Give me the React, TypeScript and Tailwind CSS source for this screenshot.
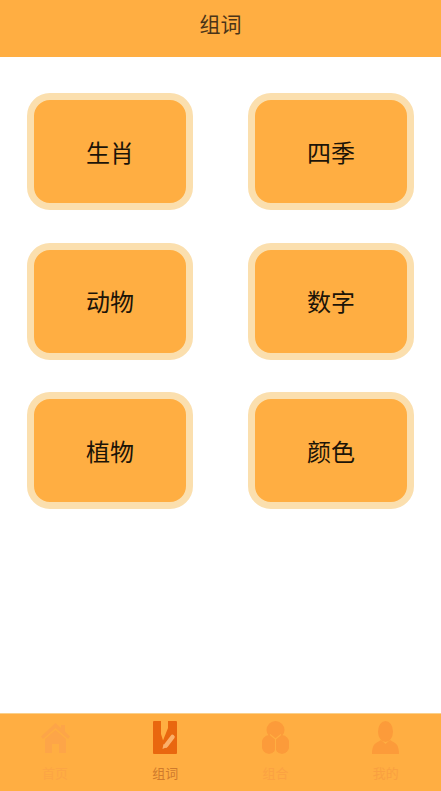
import React from 'react';

const words = ['生肖', '四季', '动物', '数字', '植物', '颜色'];

const HomeIcon = () => (
    <svg width="29" height="30" viewBox="0 0 29 30" fill="currentColor">
        <path d="M14.5 0 L20 5 V2 H24 V8.5 L29 13.5 L27 16 L14.5 5 L2 16 L0 13.5 Z" />
        <path d="M14.5 7 L25 16 V30 H18 V21 H11 V30 H4 V16 Z" />
    </svg>
);

const BookIcon = () => (
    <svg width="24" height="33" viewBox="0 0 24 33" fill="currentColor">
        <rect width="24" height="33" rx="1" />
        <path d="M8 0 H15 V7 L10 19.5 L8 13 Z" fill="#ffae42" />
        <path d="M19.5 16 L13 24.5" stroke="#fbb06a" strokeWidth="4.5" strokeLinecap="round" />
        <path d="M10.5 23 L14 26 L9.5 28 Z" fill="#fbb06a" />
    </svg>
);

const GroupIcon = () => (
    <svg width="27" height="33" viewBox="0 0 27 33" fill="currentColor">
        <circle cx="13.5" cy="9" r="9" />
        <ellipse cx="7" cy="23.5" rx="7.5" ry="9.5" />
        <ellipse cx="20" cy="23.5" rx="7.5" ry="9.5" />
        <path d="M13.5 18 V33 M13.5 18 L19 13.5 M13.5 18 L8 13.5" stroke="#ffae42" strokeWidth="1.1" fill="none" />
    </svg>
);

const UserIcon = () => (
    <svg width="27" height="33" viewBox="0 0 27 33" fill="currentColor">
        <ellipse cx="13.5" cy="10.5" rx="7.5" ry="10.5" />
        <path d="M9 19 L13.5 23 L18 19 L23 22 C25.5 23.5 27 27 27 33 H0 C0 27 1.5 23.5 4 22 Z" />
    </svg>
);

const tabs = [
    { label: '首页', icon: <HomeIcon />, iconColor: 'text-[#fda548]', labelColor: 'text-[#fca545]' },
    { label: '组词', icon: <BookIcon />, iconColor: 'text-[#e9670f]', labelColor: 'text-[#cf7a2c]' },
    { label: '组合', icon: <GroupIcon />, iconColor: 'text-[#fc9b3a]', labelColor: 'text-[#fba242]' },
    { label: '我的', icon: <UserIcon />, iconColor: 'text-[#fc9b3a]', labelColor: 'text-[#f9a040]' },
];

const App: React.FC = () => {
    return (
        <div className="w-[441px] h-[791px] flex flex-col bg-white font-['Noto_Sans_CJK_SC','Noto_Sans',sans-serif] overflow-hidden">
            {/* Title bar */}
            <header className="h-[57px] shrink-0 bg-[#ffae42] flex items-center justify-center pb-[10px] text-[21px] text-[#4a3418]">
                组词
            </header>

            {/* Word groups */}
            <main className="flex-1 pt-9 px-[27px]">
                <div className="grid grid-cols-[166px_166px] gap-x-[55px] gap-y-[32.5px]">
                    {words.map((word) => (
                        <div
                            key={word}
                            className="h-[117px] rounded-[23px] border-[7px] border-[#fbdfae] bg-[#ffae42] flex items-center justify-center text-[24px] text-[#1c1408]"
                        >
                            {word}
                        </div>
                    ))}
                </div>
            </main>

            {/* Bottom tabs */}
            <nav className="h-[78px] shrink-0 bg-[#ffae42] border-t border-[#fbd08a] grid grid-cols-4">
                {tabs.map((tab) => (
                    <div key={tab.label} className="flex flex-col items-center pt-[7px]">
                        <div className={`h-[33px] flex items-center ${tab.iconColor}`}>{tab.icon}</div>
                        <span className={`mt-[9px] text-[13px] leading-[20px] ${tab.labelColor}`}>
                            {tab.label}
                        </span>
                    </div>
                ))}
            </nav>
        </div>
    );
};

export default App;
